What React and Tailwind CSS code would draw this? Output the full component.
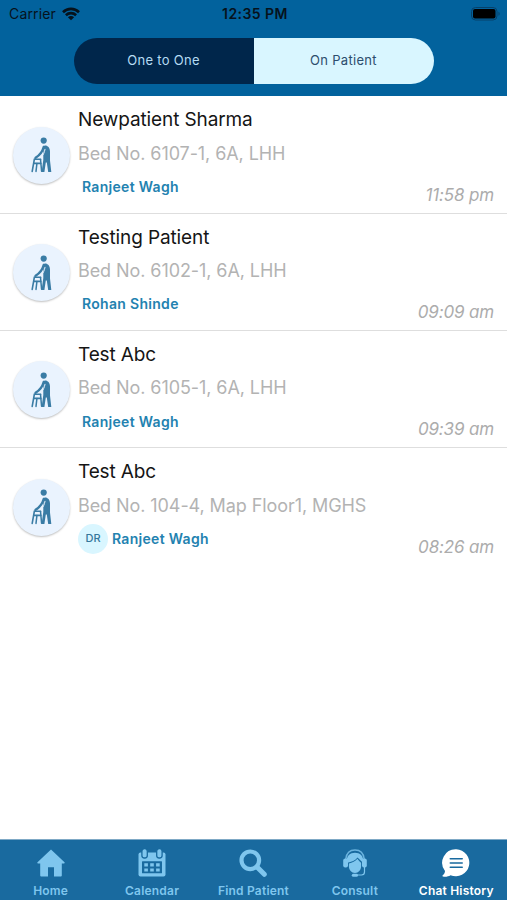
import React from 'react';

const CHATS = [
  { id: 1, name: 'Newpatient Sharma', bed: 'Bed No. 6107-1, 6A, LHH', doctor: 'Ranjeet Wagh', time: '11:58 pm' },
  { id: 2, name: 'Testing Patient', bed: 'Bed No. 6102-1, 6A, LHH', doctor: 'Rohan Shinde', time: '09:09 am' },
  { id: 3, name: 'Test Abc', bed: 'Bed No. 6105-1, 6A, LHH', doctor: 'Ranjeet Wagh', time: '09:39 am' },
  { id: 4, name: 'Test Abc', bed: 'Bed No. 104-4, Map Floor1, MGHS', doctor: 'Ranjeet Wagh', time: '08:26 am', badge: 'DR' },
];

const WifiIcon = () => (
  <svg width="18" height="14" viewBox="0 0 18 14" fill="none" stroke="#06121c" strokeWidth="2.6">
    <path d="M1 5.2C5.5.8 12.5.8 17 5.2" />
    <path d="M3.9 8.2C6.8 5.4 11.2 5.4 14.1 8.2" />
    <path d="M9 13.3 5.9 10.2C7.7 8.6 10.3 8.6 12.1 10.2Z" fill="#06121c" stroke="none" />
  </svg>
);

const BatteryIcon = () => (
  <svg width="30" height="14" viewBox="0 0 30 14">
    <rect x="0.5" y="0.5" width="25.5" height="12.5" rx="4" fill="none" stroke="#06416a" strokeWidth="1" />
    <rect x="2" y="2" width="22.5" height="9.5" rx="2" fill="#000" />
    <path d="M27.5 4.7C29 5.3 29 8.2 27.5 8.8Z" fill="#06416a" />
  </svg>
);

const PatientIcon = () => (
  <svg width="22" height="36" viewBox="0 0 22 36" fill="none" stroke="#3a7ca5" strokeLinecap="round" strokeLinejoin="round">
    <circle cx="12.7" cy="3.6" r="3.1" fill="#3a7ca5" stroke="none" />
    <path d="M12.3 9C15 7.3 19 9.3 19 14.5V23.5L20.3 35H17.2L15.8 25.5H14.8L13.4 35H10.6L12.3 23V16Z" fill="#3a7ca5" stroke="none" />
    <path d="M12.7 10C11.3 15.5 9.3 17.8 4.6 20.8" strokeWidth="2.4" />
    <path d="M3.4 22 1.2 34.4M3.6 22.2H9.6M3 26.4H9.8" strokeWidth="1.6" />
    <path d="M9.5 22.4 10.6 34.2M5.9 26.6 5 34.4" strokeWidth="1.5" />
    <path d="M14 12.3C13.4 15.5 12.4 17.7 10.9 19.3" stroke="#eaf3fe" strokeWidth="1" />
  </svg>
);

const HomeIcon = () => (
  <svg width="28" height="28" viewBox="0 0 28 28" fill="currentColor">
    <path d="M14 .4 27.5 13.3C28 13.8 27.7 14.5 27 14.5H24.8V26.5Q24.8 27.5 23.8 27.5H17V18.2H11V27.5H4.2Q3.2 27.5 3.2 26.5V14.5H1C.3 14.5 0 13.8.5 13.3Z" />
  </svg>
);

const CalendarIcon = () => (
  <svg width="28" height="28" viewBox="0 0 28 28" className="overflow-visible">
    <path d="M2.5 3.5H25.5Q27.5 3.5 27.5 5.5V25.5Q27.5 27.5 25.5 27.5H2.5Q.5 27.5.5 25.5V5.5Q.5 3.5 2.5 3.5Z" fill="currentColor" />
    <rect x="4" y="12.3" width="20" height="12" rx="0.5" fill="#196a9f" />
    <path d="M6.3 14.2h3.6v3.2H6.3zm5.9 0h3.6v3.2h-3.6zm5.9 0h3.6v3.2h-3.6zM6.3 19.4h3.6v3.2H6.3zm5.9 0h3.6v3.2h-3.6zm5.9 0h3.6v3.2h-3.6z" fill="currentColor" />
    <rect x="3.9" y="-0.3" width="5.4" height="9.3" rx="2.5" fill="currentColor" stroke="#196a9f" strokeWidth="1.3" />
    <rect x="18.7" y="-0.3" width="5.4" height="9.3" rx="2.5" fill="currentColor" stroke="#196a9f" strokeWidth="1.3" />
  </svg>
);

const SearchIcon = () => (
  <svg width="28" height="28" viewBox="0 0 28 28" fill="none" stroke="currentColor">
    <circle cx="11.3" cy="11.3" r="8.8" strokeWidth="4.2" />
    <path d="M18 18 25.3 25.3" strokeWidth="5" strokeLinecap="round" />
  </svg>
);

const ConsultIcon = () => (
  <svg width="28" height="28" viewBox="0 0 28 28" fill="none" stroke="currentColor">
    <path d="M4.8 10C5.5 3.8 9 1 14 1S22.5 3.8 23.2 10" strokeWidth="1.5" opacity="0.8" />
    <path d="M5.8 14C5 6.5 9.3 3.8 14 3.8S23 6.5 22.2 14L16.5 8.4C14.5 11.2 10.5 12.8 5.8 14Z" fill="currentColor" stroke="none" />
    <rect x="2.2" y="9.5" width="4.8" height="9" rx="2" fill="currentColor" stroke="none" />
    <rect x="21" y="9.5" width="4.8" height="9" rx="2" fill="currentColor" stroke="none" />
    <path d="M7.9 14.4C11.3 13.7 14.3 12.2 16.4 9.8C17.7 11.6 18.8 12.8 20.1 13.8V17.5C20 21 17.5 24 14 24S8 21 7.9 17.5Z" fill="currentColor" stroke="none" />
    <path d="M23.5 18V23Q23.5 26 20.5 26H15" strokeWidth="1.2" />
    <rect x="10.8" y="24.7" width="6.2" height="3" rx="1.5" fill="currentColor" stroke="none" />
  </svg>
);

const ChatIcon = () => (
  <svg width="28" height="28" viewBox="0 0 28 28">
    <path d="M14.3.3A13.5 13.5 0 1 1 8.5 26.2C6.5 27.5 3.5 28 1 27.5C.2 27.3.3 26.6.8 26.2C2.3 25 3 23.5 3 22A13.5 13.5 0 0 1 14.3.3Z" fill="currentColor" />
    <path d="M8.3 9.8H20.2M8.3 14H20.2M8.3 18.2H20.2" stroke="#196a9f" strokeWidth="1.6" strokeLinecap="round" />
  </svg>
);

const TABS = [
  { label: 'Home', Icon: HomeIcon },
  { label: 'Calendar', Icon: CalendarIcon },
  { label: 'Find Patient', Icon: SearchIcon },
  { label: 'Consult', Icon: ConsultIcon },
  { label: 'Chat History', Icon: ChatIcon, active: true },
];

const ChatRow = ({ chat }) => (
  <li className="flex h-[117.3px] border-b border-[#dedede] px-[13px] last:border-transparent">
    <div className="mt-[30.5px] flex size-[57px] shrink-0 items-center justify-center rounded-full bg-[#eaf3fe] shadow-[0_1px_2px_rgba(0,0,0,0.25)]">
      <PatientIcon />
    </div>
    <div className="ml-2 flex-1 pt-[7px] whitespace-nowrap">
      <h2 className="text-[19px] leading-[33.5px] tracking-[-0.12px] text-[#151515]">{chat.name}</h2>
      <p className="text-[18px] leading-[33.5px] tracking-[-0.08px] text-[#b3b3b3]">{chat.bed}</p>
      <div className="flex h-[32.5px] items-center text-[14px] font-semibold tracking-[0.3px] text-[#2382b0]">
        {chat.badge && (
          <span className="flex size-[30px] items-center justify-center rounded-full bg-[#d9f6ff] text-[11px] font-medium tracking-normal text-[#35779c]">
            {chat.badge}
          </span>
        )}
        <span className="ml-1">{chat.doctor}</span>
      </div>
    </div>
    <time className="mt-[85.5px] text-[17px] leading-[26px] tracking-[-0.15px] whitespace-nowrap text-[#acacac] italic">{chat.time}</time>
  </li>
);

export default function App() {
  return (
    <div className="flex h-[900px] w-[507px] flex-col overflow-hidden bg-white font-['Inter',sans-serif]">
      <header className="h-24 bg-[#02629d]">
        <div className="grid h-[27px] grid-cols-3 items-center pr-[6px] pl-[9px] text-[#06121c]">
          <div className="flex items-center gap-[6px] text-[14px] tracking-[0.15px]">
            <span>Carrier</span>
            <WifiIcon />
          </div>
          <span className="text-center text-[14px] font-semibold tracking-[0.45px]">12:35 PM</span>
          <div className="flex justify-end">
            <BatteryIcon />
          </div>
        </div>
        <div className="mx-auto mt-[11px] flex h-[46px] w-[360px] overflow-hidden rounded-full text-[13px] tracking-[0.3px]">
          <button className="flex-1 bg-[#00264b] text-[#b5dcf3]">One to One</button>
          <button className="flex-1 bg-[#d9f6ff] text-[#2c4d6d]">On Patient</button>
        </div>
      </header>

      <ul className="flex-1 pt-[0.4px]">
        {CHATS.map((chat) => (
          <ChatRow key={chat.id} chat={chat} />
        ))}
      </ul>

      <nav className="grid h-[61px] grid-cols-5 border-t border-[#7fa9c6] bg-[#196a9f]">
        {TABS.map(({ label, Icon, active }) => (
          <div key={label} className={`flex flex-col items-center pt-[9px] ${active ? 'text-white' : 'text-[#7fc6ee]'}`}>
            <Icon />
            <span className="mt-[5px] text-[12px] leading-[18px] font-semibold tracking-[0.2px] whitespace-nowrap">{label}</span>
          </div>
        ))}
      </nav>
    </div>
  );
}
